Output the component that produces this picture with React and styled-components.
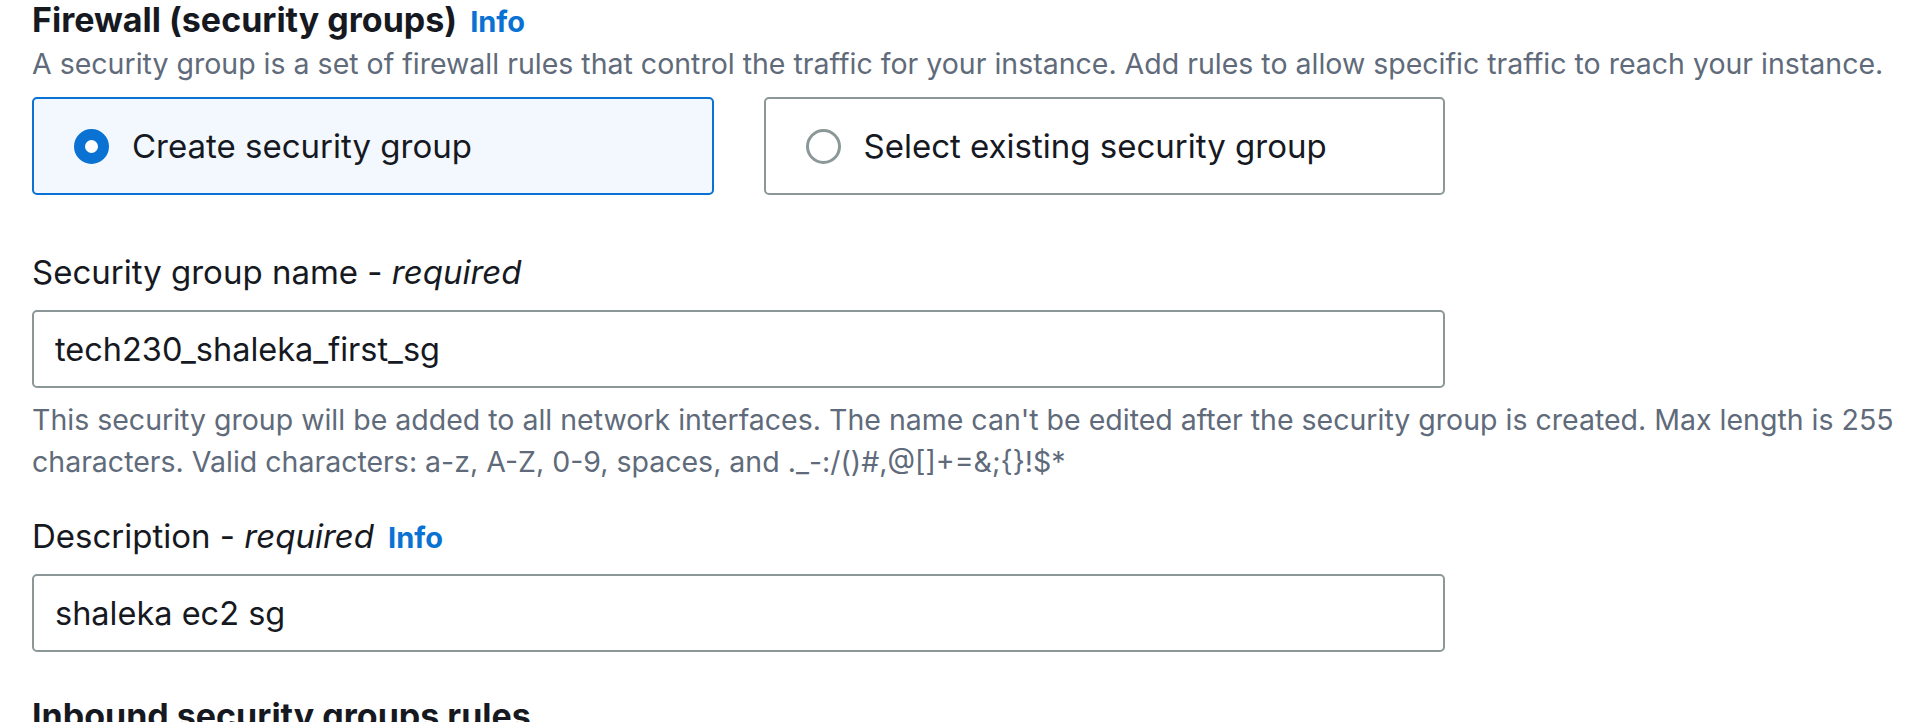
import styled, { createGlobalStyle } from "styled-components";

const GlobalStyle = createGlobalStyle`
  html, body {
    margin: 0;
    padding: 0;
    background: #ffffff;
  }
  body {
    font-family: "Inter", "Roboto", sans-serif;
    color: #16191f;
  }
`;

const Page = styled.div`
  padding: 0 6px 0 32px;
  overflow: hidden;
  height: 722px;
  box-sizing: border-box;
`;

const Heading = styled.h2`
  margin: ${(p) => p.$top || 0}px 0 0;
  font-size: 34px;
  font-weight: 700;
  line-height: 40px;
  color: #16191f;
`;

const InfoLink = styled.a`
  margin-left: ${(p) => p.$gap || 13}px;
  font-size: 29px;
  font-weight: 700;
  line-height: 1;
  color: #0972d3;
  text-decoration: none;
  font-style: normal;
`;

const Hint = styled.p`
  margin: ${(p) => p.$top || 0}px 0 0;
  font-size: 28.5px;
  line-height: ${(p) => p.$lh || 40}px;
  color: #5f6b7a;
`;

const Tiles = styled.div`
  display: grid;
  grid-template-columns: 1fr 1fr;
  column-gap: 50px;
  width: 1413px;
  margin-top: 13px;
`;

const Tile = styled.label`
  display: flex;
  align-items: center;
  gap: 23px;
  height: 98px;
  box-sizing: border-box;
  padding: 0 40px;
  border: 2px solid ${(p) => (p.$checked ? "#0972d3" : "#8c9898")};
  border-radius: 5px;
  background: ${(p) => (p.$checked ? "#f2f8fd" : "#ffffff")};
  font-size: 33px;
  color: #16191f;
  cursor: pointer;
`;

const Radio = styled.span`
  flex: none;
  width: 35px;
  height: 35px;
  box-sizing: border-box;
  border-radius: 50%;
  border: ${(p) => (p.$checked ? "11px solid #0972d3" : "3px solid #8c9898")};
  background: #ffffff;
`;

const Field = styled.div`
  margin-top: ${(p) => p.$top || 0}px;
`;

const Label = styled.div`
  font-size: 33px;
  line-height: 44px;
  color: #16191f;

  em {
    font-style: italic;
  }
`;

const Input = styled.input`
  display: block;
  width: 1413px;
  height: 78px;
  box-sizing: border-box;
  margin-top: 16px;
  padding: 0 21px;
  border: 2px solid #8c9898;
  border-radius: 5px;
  font-family: "Inter", "Roboto", sans-serif;
  font-size: 32.5px;
  color: #16191f;
  background: #ffffff;
  outline: none;
`;

function RadioTile({ checked, children }) {
  return (
    <Tile $checked={checked}>
      <Radio $checked={checked} />
      {children}
    </Tile>
  );
}

export default function App() {
  return (
    <Page>
      <GlobalStyle />
      <Heading>
        Firewall (security groups)
        <InfoLink href="#">Info</InfoLink>
      </Heading>
      <Hint $top={4}>
        A security group is a set of firewall rules that control the traffic for your instance. Add rules to allow specific traffic to reach your instance.
      </Hint>

      <Tiles>
        <RadioTile checked>Create security group</RadioTile>
        <RadioTile>Select existing security group</RadioTile>
      </Tiles>

      <Field $top={55}>
        <Label>
          Security group name - <em>required</em>
        </Label>
        <Input defaultValue="tech230_shaleka_first_sg" readOnly />
        <Hint $top={11} $lh={42}>
          This security group will be added to all network interfaces. The name can't be edited after the security group is created. Max length is 255 characters. Valid characters: a-z, A-Z, 0-9, spaces, and ._-:/()#,@[]+=&;{"{}"}!$*
        </Hint>
      </Field>

      <Field $top={31}>
        <Label>
          Description - <em>required</em>
          <InfoLink href="#" $gap={14}>Info</InfoLink>
        </Label>
        <Input defaultValue="shaleka ec2 sg" readOnly />
      </Field>

      <Heading $top={44}>Inbound security groups rules</Heading>
    </Page>
  );
}
